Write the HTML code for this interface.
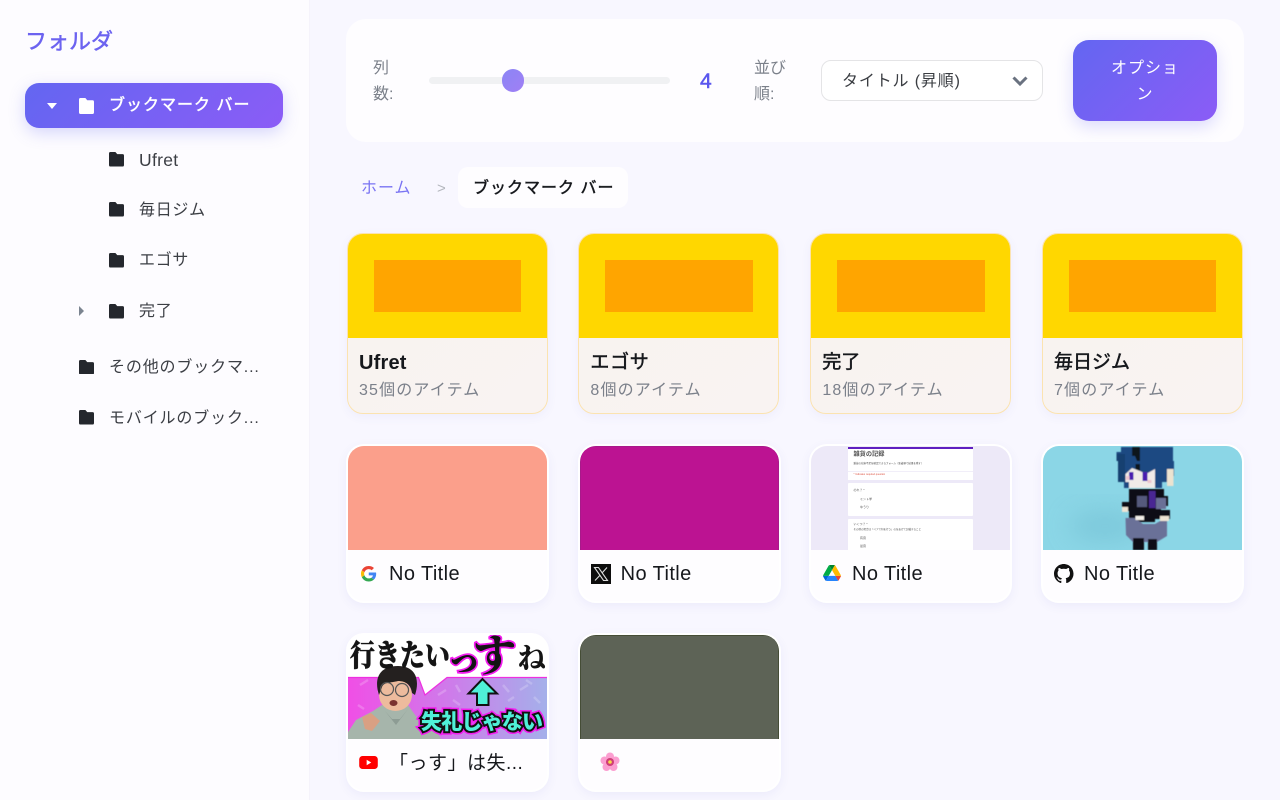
<!DOCTYPE html>
<html lang="ja"><head><meta charset="utf-8"><title>Bookmarks</title>
<style>
*{box-sizing:border-box;margin:0;padding:0}
html,body{width:1280px;height:800px;overflow:hidden;background:#f8f7ff;font-family:"Liberation Sans","Noto Sans CJK JP",sans-serif}
.a{position:absolute;white-space:nowrap}
#side{position:absolute;left:0;top:0;width:310px;height:800px;background:#fdfcff;border-right:1px solid #f5f3fb}
.t{font-size:16px;color:#3b3e44;line-height:24px;letter-spacing:.7px}
.fi{position:absolute;width:15px;height:14.500px}
.card{position:absolute;overflow:hidden}
.card .img{position:absolute;left:0;top:0;width:199px;height:104px;overflow:hidden}
.folder{width:201px;height:181px;border-radius:16px;border:1px solid #fbe3b0;background:linear-gradient(135deg,#f8f3ef,#f9f3f2);box-shadow:0 3px 10px rgba(90,80,200,.06)}
.folder .img{background:#ffd700;height:103.700px}
.folder i{position:absolute;left:25.700px;top:26px;width:147.500px;height:52px;background:#ffa500}
.nm{position:absolute;left:11px;top:117px;font-size:19px;line-height:24px;color:#16181c;white-space:nowrap;-webkit-text-stroke:.5px #16181c}
.ct{position:absolute;left:11px;top:146px;font-size:16px;line-height:22px;color:#7b808a;white-space:nowrap;letter-spacing:1.150px}
.lk{width:203px;height:159px;border-radius:18px;border:2px solid #fff;background:#fefdff;box-shadow:0 3px 10px rgba(90,80,200,.07)}
.lk .img{border-radius:14px 14px 0 0}
.lt{position:absolute;left:41px;top:116px;font-size:20px;line-height:24px;color:#16181c;white-space:nowrap;letter-spacing:.4px}
.fav{position:absolute}
</style></head><body>
<svg width="0" height="0" style="position:absolute"><defs><symbol id="f" viewBox="0 0 16 14" preserveAspectRatio="none"><path d="M1.500 0H6.800L8.800 2H14.500A1.500 1.500 0 0 1 16 3.500V12.500A1.500 1.500 0 0 1 14.500 14H1.500A1.500 1.500 0 0 1 0 12.500V1.500A1.500 1.500 0 0 1 1.500 0Z"/></symbol></defs></svg>

<div id="side">
<div class="a" style="left:25px;top:27px;font-size:22px;line-height:30px;color:#6c63f0;-webkit-text-stroke:.5px #6c63f0">フォルダ</div>
<div class="a" style="left:25px;top:83px;width:258px;height:45px;border-radius:14px;background:linear-gradient(135deg,#6366f1,#8b5cf6);box-shadow:0 5px 16px rgba(99,102,241,.25)"></div>
<svg class="a" style="left:47px;top:103px" width="10" height="6"><path d="M0 0H10L5 6Z" fill="#fff"/></svg>
<svg class="fi" style="left:79px;top:98px;height:16px" fill="#fff"><use href="#f"/></svg>
<div class="a" style="left:109px;top:94px;font-size:16px;line-height:24px;color:#fff;letter-spacing:1px;-webkit-text-stroke:.5px #fff">ブックマーク バー</div>

<svg class="fi" style="left:109px;top:152px" fill="#24272d"><use href="#f"/></svg>
<div class="a t" style="left:139px;top:148px;font-size:17.500px;letter-spacing:.3px">Ufret</div>
<svg class="fi" style="left:109px;top:202px" fill="#24272d"><use href="#f"/></svg>
<div class="a t" style="left:139px;top:199px">毎日ジム</div>
<svg class="fi" style="left:109px;top:253px" fill="#24272d"><use href="#f"/></svg>
<div class="a t" style="left:139px;top:249px">エゴサ</div>
<svg class="a" style="left:79px;top:306px" width="5" height="10"><path d="M0 0L5 5L0 10Z" fill="#7b8490"/></svg>
<svg class="fi" style="left:109px;top:304px" fill="#24272d"><use href="#f"/></svg>
<div class="a t" style="left:139px;top:300px">完了</div>
<svg class="fi" style="left:79px;top:359.500px" fill="#24272d"><use href="#f"/></svg>
<div class="a t" style="left:109px;top:356px;letter-spacing:.85px">その他のブックマ...</div>
<svg class="fi" style="left:79px;top:410px" fill="#24272d"><use href="#f"/></svg>
<div class="a t" style="left:109px;top:407px;letter-spacing:.85px">モバイルのブック...</div>
</div>

<!-- toolbar -->
<div class="a" style="left:346px;top:18.500px;width:897.500px;height:123px;border-radius:20px;background:#fefdff"></div>
<div class="a" style="left:373px;top:56px;font-size:16px;line-height:26px;color:#7b808a">列<br>数:</div>
<div class="a" style="left:429px;top:76.500px;width:241px;height:7.500px;border-radius:4px;background:#f0f1f3"></div>
<div class="a" style="left:501.500px;top:69px;width:22.500px;height:22.500px;border-radius:50%;background:linear-gradient(135deg,#8b85f5,#a07ff5)"></div>
<div class="a" style="left:700px;top:70px;font-size:21px;line-height:24px;color:#5a57ee;-webkit-text-stroke:.5px #5a57ee">4</div>
<div class="a" style="left:754px;top:56px;font-size:16px;line-height:26px;color:#7b808a">並び<br>順:</div>
<div class="a" style="left:821px;top:60px;width:222px;height:41px;border-radius:10px;background:#fff;border:1.300px solid #e4e4e6"></div>
<div class="a" style="left:842px;top:70px;font-size:16px;line-height:24px;color:#3a3d42;letter-spacing:.85px">タイトル (昇順)</div>
<svg class="a" style="left:1012px;top:75px" width="16" height="12"><path d="M1.500 2.500L8 9L14.500 2.500" fill="none" stroke="#6a7280" stroke-width="3"/></svg>
<div class="a" style="left:1073px;top:39.500px;width:144px;height:81.500px;border-radius:16px;background:linear-gradient(135deg,#6366f1,#8b5cf6);box-shadow:0 6px 16px rgba(99,102,241,.22)"></div>
<div class="a" style="left:1073px;top:56px;width:144px;text-align:center;font-size:16px;line-height:26px;color:#fff;letter-spacing:1px">オプショ<br>ン</div>

<!-- breadcrumb -->
<div class="a" style="left:361px;top:177px;font-size:16px;line-height:24px;color:#7a74f3;letter-spacing:1px">ホーム</div>
<div class="a" style="left:437px;top:178px;font-size:15px;line-height:22px;color:#b3b6bd">&gt;</div>
<div class="a" style="left:458px;top:167px;width:170px;height:41px;border-radius:10px;background:#fefdff"></div>
<div class="a" style="left:473px;top:177px;font-size:16px;line-height:24px;color:#17191d;letter-spacing:1px;-webkit-text-stroke:.5px #17191d">ブックマーク バー</div>

<!-- folders -->
<div class="card folder" style="left:347px;top:233px"><div class="img"><i></i></div><div class="nm" style="font-size:20px;font-weight:700;letter-spacing:.2px;-webkit-text-stroke:0">Ufret</div><div class="ct">35個のアイテム</div></div>
<div class="card folder" style="left:578.400px;top:233px"><div class="img"><i></i></div><div class="nm" style="letter-spacing:.7px">エゴサ</div><div class="ct">8個のアイテム</div></div>
<div class="card folder" style="left:810.330px;top:233px"><div class="img"><i></i></div><div class="nm">完了</div><div class="ct">18個のアイテム</div></div>
<div class="card folder" style="left:1042px;top:233px"><div class="img"><i></i></div><div class="nm">毎日ジム</div><div class="ct">7個のアイテム</div></div>

<!-- row 2 -->
<div class="card lk" style="left:346px;top:444px"><div class="img" style="background:#fb9f8b"></div>
<svg class="fav" viewBox="0 0 48 48" style="left:13px;top:120px;width:15.500px;height:15.500px"><path fill="#EA4335" d="M24 9.500c3.500 0 6.700 1.200 9.200 3.600l6.900-6.900C35.900 2.400 30.500 0 24 0 14.600 0 6.500 5.400 2.600 13.200l8 6.200C12.500 13.700 17.800 9.500 24 9.500z"/><path fill="#4285F4" d="M47 24.500c0-1.600-.1-3.100-.4-4.500H24v9h12.900c-.6 3-2.200 5.500-4.700 7.200l7.700 6C44.400 38 47 31.800 47 24.500z"/><path fill="#FBBC05" d="M10.500 28.600c-.5-1.400-.8-3-.8-4.600s.3-3.200.8-4.600l-8-6.200C.9 16.500 0 20.100 0 24s.9 7.500 2.600 10.800z"/><path fill="#34A853" d="M24 48c6.500 0 11.900-2.100 15.900-5.800l-7.700-6c-2.200 1.400-4.900 2.300-8.200 2.300-6.200 0-11.500-4.200-13.400-9.900l-8 6.200C6.500 42.600 14.600 48 24 48z"/></svg>
<div class="lt">No Title</div></div>

<div class="card lk" style="left:577.670px;top:444px"><div class="img" style="background:#bc1392;border:1px solid #a81a8a;border-bottom:0"></div>
<svg class="fav" viewBox="0 0 20 20" style="left:11px;top:117.500px;width:20px;height:20px"><rect width="20" height="20" fill="#0d0d0d"/><path d="M3.500 3.500H7.500L16.500 16.500H12.500Z" fill="none" stroke="#ddd" stroke-width="1.100"/><path d="M16 3.500L11 9M9 11.200L4 16.500" stroke="#ddd" stroke-width="1.100"/></svg>
<div class="lt">No Title</div></div>

<div class="card lk" style="left:809px;top:444px"><div class="img" style="background:#ede9f8">
<div class="a" style="left:37.300px;top:1.300px;width:124.500px;height:32.700px;background:#fff;border-top:2px solid #5f1fc0"></div>
<div class="a" style="left:42.500px;top:4px;font-size:6.200px;font-weight:700;line-height:10px;color:#555">雑貨の記録</div>
<div class="a" style="left:42.500px;top:16px;font-size:2.500px;line-height:4px;color:#444">雑貨の在庫不足を確認できるフォーム（新着順で結果を残す）</div>
<div class="a" style="left:37.300px;top:25px;width:124.500px;height:1px;background:#f1eef9"></div>
<div class="a" style="left:42.500px;top:27px;font-size:2.500px;line-height:4px;color:#d54">* Indicates required question</div>
<div class="a" style="left:37.300px;top:37px;width:124.500px;height:32.700px;background:#fff;border-radius:1px"></div>
<div class="a" style="left:42.500px;top:42px;font-size:3px;line-height:5px;color:#555">のれ？ *</div>
<div class="a" style="left:49px;top:51px;font-size:3px;line-height:5px;color:#555">ミント学</div>
<div class="a" style="left:49px;top:59px;font-size:3px;line-height:5px;color:#555">ゆうり</div>
<div class="a" style="left:37.300px;top:72.700px;width:124.500px;height:40px;background:#fff;border-radius:1px"></div>
<div class="a" style="left:42.500px;top:76px;font-size:3px;line-height:5px;color:#555">いくつ？ *</div>
<div class="a" style="left:42.500px;top:82px;font-size:2.500px;line-height:4px;color:#444">その他の場合は「ペアで何を行う」のをあげて記載すること</div>
<div class="a" style="left:49px;top:90px;font-size:3px;line-height:5px;color:#555">有音</div>
<div class="a" style="left:49px;top:98px;font-size:3px;line-height:5px;color:#555">最音</div>
</div>
<svg class="fav" viewBox="0 0 87.300 78" style="left:11.700px;top:119px;width:18px;height:16px"><path d="M6.600 66.850l3.850 6.650c.8 1.400 1.950 2.500 3.300 3.300L27.500 53H0c0 1.550.4 3.100 1.200 4.500z" fill="#0066da"/><path d="M43.650 25L29.900 1.200c-1.350.8-2.500 1.900-3.300 3.300L1.200 48.500C.4 49.900 0 51.450 0 53h27.500z" fill="#00ac47"/><path d="M73.550 76.800c1.350-.8 2.500-1.900 3.300-3.300l1.600-2.750L86.100 57.500c.8-1.400 1.200-2.950 1.200-4.500H59.800l5.850 11.500z" fill="#ea4335"/><path d="M43.650 25L57.400 1.200C56.050.4 54.500 0 52.900 0H34.400c-1.600 0-3.150.45-4.500 1.200z" fill="#00832d"/><path d="M59.800 53H27.500L13.750 76.800c1.350.8 2.900 1.200 4.500 1.200h50.800c1.600 0 3.150-.45 4.500-1.200z" fill="#2684fc"/><path d="M73.400 26.500L60.700 4.500c-.8-1.400-1.950-2.500-3.300-3.300L43.650 25 59.800 53h27.450c0-1.550-.4-3.100-1.200-4.500z" fill="#ffba00"/></svg>
<div class="lt">No Title</div></div>

<div class="card lk" style="left:1041px;top:444px"><div class="img" style="background:#8bd6e6">
<svg width="199" height="104" viewBox="0 0 199 104" style="position:absolute;left:0;top:0">
<defs><filter id="b1" x="-50%" y="-50%" width="200%" height="200%"><feGaussianBlur stdDeviation="12"/></filter><filter id="b2"><feGaussianBlur stdDeviation=".45"/></filter></defs>
<ellipse cx="62" cy="80" rx="36" ry="16" fill="#76c2d6" opacity=".65" filter="url(#b1)"/>
<g filter="url(#b2)">
<path d="M78 1H130V15H131V30H127V36H119V42H81V36H75V15H73.500V6H78Z" fill="#1f4a82"/>
<path d="M73.500 8H82V36H75V15H73.500Z" fill="#19406f"/>
<path d="M89 1H97V15H94L92 10H89Z" fill="#10151c"/>
<rect x="92.500" y="18" width="4.500" height="7" fill="#10151c"/>
<path d="M82.500 28L89 22L97 25L103 28L112 23V42H86V36H82.500Z" fill="#f0ebe8"/>
<rect x="86" y="26" width="4.500" height="8" fill="#4a1fb0"/><rect x="99.500" y="26" width="5" height="9" fill="#4a1fb0"/>
<rect x="83" y="30" width="3.500" height="4" fill="#edc4cd"/><rect x="104.500" y="34" width="4" height="3" fill="#edc4cd"/>
<rect x="124" y="23" width="6.500" height="17" fill="#ece3d0"/>
<path d="M86 43H121V50H125V60H118V64H127V73H112V76H86V65H79V56H86Z" fill="#0c0d12"/>
<rect x="106" y="45" width="6.500" height="17" fill="#4a2793"/><rect x="94" y="50" width="10" height="11" fill="#555a7c"/><rect x="113" y="52" width="10" height="11" fill="#6b7096"/>
<path d="M82.500 72H92L100 78H112L124 71V90L114 96H90L83 89Z" fill="#6b7198"/>
<rect x="92.500" y="70" width="8.500" height="4" fill="#f2efe9"/><rect x="79" y="61" width="6" height="5" fill="#eee4d4"/><rect x="117" y="70" width="9" height="5" fill="#eee4d4"/>
<rect x="90" y="92" width="11" height="12" fill="#0c0d12"/><rect x="105" y="93" width="9" height="11" fill="#0c0d12"/>
</g>
</svg></div>
<svg class="fav" viewBox="0 0 16 16" style="left:11px;top:117.500px;width:19.500px;height:19.500px" fill="#111"><path d="M8 0C3.580 0 0 3.580 0 8c0 3.540 2.290 6.530 5.470 7.590.4.070.55-.17.55-.38 0-.19-.01-.82-.01-1.490-2.010.37-2.530-.49-2.690-.94-.09-.23-.48-.94-.82-1.130-.28-.15-.68-.52-.01-.53.630-.01 1.080.580 1.230.820.720 1.210 1.870.870 2.330.660.070-.520.280-.870.510-1.070-1.780-.2-3.640-.89-3.640-3.950 0-.87.310-1.590.820-2.150-.08-.2-.36-1.020.08-2.120 0 0 .67-.21 2.200.82.640-.18 1.320-.27 2-.27s1.360.09 2 .27c1.530-1.040 2.200-.82 2.200-.82.440 1.100.160 1.920.080 2.120.510.560.820 1.270.820 2.150 0 3.070-1.870 3.750-3.650 3.950.290.250.540.730.540 1.480 0 1.070-.01 1.930-.01 2.200 0 .210.150.460.550.380A8.010 8.010 0 0 0 16 8c0-4.420-3.580-8-8-8z"/></svg>
<div class="lt">No Title</div></div>

<!-- row 3 -->
<div class="card lk" style="left:346px;top:633px"><div class="img" style="background:#fff">
<svg width="199" height="104" viewBox="0 0 199 104" style="position:absolute;left:0;top:0">
<defs><linearGradient id="g" x1="0" x2="1" y1="0" y2="0"><stop offset="0" stop-color="#f04fe6"/><stop offset=".5" stop-color="#cf7aea"/><stop offset="1" stop-color="#a4b0ea"/></linearGradient></defs>
<path d="M0 42.500H70.500L77 60L99 42.500H199V104H0Z" fill="url(#g)"/>
<path d="M0 42.500H70.500L77 60L99 42.500H199" fill="none" stroke="#ee2fe0" stroke-width="1.200"/>
<g stroke="#fff" stroke-opacity=".2" stroke-width="2.500"><path d="M12 50l8-5M30 56l6 6M90 60l8-5M108 50l4 7M155 50l6 7M172 55l8-5M186 62l6 6M160 66l6-4M105 65l7 5M10 70l6 4M178 45l6 4"/></g>
<path d="M0 104V97L8 85L25 76L34 70H60L70 84L85 90L93 104Z" fill="#a6b5ab"/>
<path d="M37 76L48 90L60 74L52 84H44Z" fill="#8d9c94"/>
<path d="M14 82L23 78L32 86L24 96L17 94Z" fill="#d9a083"/>
<ellipse cx="47.500" cy="60" rx="16.500" ry="16" fill="#edbb9d"/>
<path d="M31 60C26 45 30 31 50 31C68 31 72 45 67 60L64 58C63 50 58 46 50 46C42 48 36 47 34 52Z" fill="#24201f"/>
<circle cx="39" cy="54" r="6.500" fill="none" stroke="#555" stroke-width="1.200"/><circle cx="54" cy="55" r="6.500" fill="none" stroke="#555" stroke-width="1.200"/>
<ellipse cx="45.500" cy="68" rx="4" ry="3" fill="#7a3230"/>
<text transform="translate(2,31) scale(1,1.200)" font-family="'Noto Serif CJK SC','Noto Sans CJK JP',serif" font-weight="900" font-size="25" fill="#141414" stroke="#141414" stroke-width=".5">行きたい</text>
<text x="98" y="37" font-family="'Noto Serif CJK SC','Noto Sans CJK JP',serif" font-weight="900" font-size="36" fill="#141414" stroke="#f41cf0" stroke-width="3.500" paint-order="stroke">っ</text>
<text x="125" y="36" font-family="'Noto Serif CJK SC','Noto Sans CJK JP',serif" font-weight="900" font-size="43" fill="#141414" stroke="#f41cf0" stroke-width="3.500" paint-order="stroke">す</text>
<text x="170" y="33" font-family="'Noto Serif CJK SC','Noto Sans CJK JP',serif" font-weight="900" font-size="28" fill="#141414">ね</text>
<path d="M134.500 44L120.500 58.500H129V70H140.500V58.500H149Z" fill="#4ff0d8" stroke="#111" stroke-width="2"/>
<text x="73" y="94" font-family="'Noto Sans CJK JP',sans-serif" font-weight="900" font-size="21" fill="none" stroke="#f41cf0" stroke-width="7" textLength="122">失礼じゃない</text>
<text x="73" y="94" font-family="'Noto Sans CJK JP',sans-serif" font-weight="900" font-size="21" fill="#4ff0d8" stroke="#111" stroke-width="4" paint-order="stroke" textLength="122">失礼じゃない</text>
</svg></div>
<svg class="fav" viewBox="0 0 20 14" style="left:11.300px;top:120.700px;width:19px;height:13px"><rect width="20" height="14" rx="3.500" fill="#f00"/><path d="M8 4L13 7L8 10Z" fill="#fff"/></svg>
<div class="lt" style="left:41px;top:105px;line-height:48px;font-size:19px;letter-spacing:.5px">「っす」は失...</div></div>

<div class="card lk" style="left:577.670px;top:633px"><div class="img" style="background:#5d6356;border:1px solid #454d36;border-bottom:0"></div>
<svg class="fav" viewBox="0 0 20 20" style="left:20.300px;top:116.700px;width:20px;height:20px"><g fill="#fb9ed0"><circle cx="10" cy="4.500" r="4"/><circle cx="15.500" cy="8.500" r="4"/><circle cx="13.500" cy="15" r="4"/><circle cx="6.500" cy="15" r="4"/><circle cx="4.500" cy="8.500" r="4"/></g><circle cx="10" cy="10" r="4" fill="#cf3d78"/><circle cx="10" cy="10" r="1.800" fill="#f5d94a"/></svg>
</div>
</body></html>
